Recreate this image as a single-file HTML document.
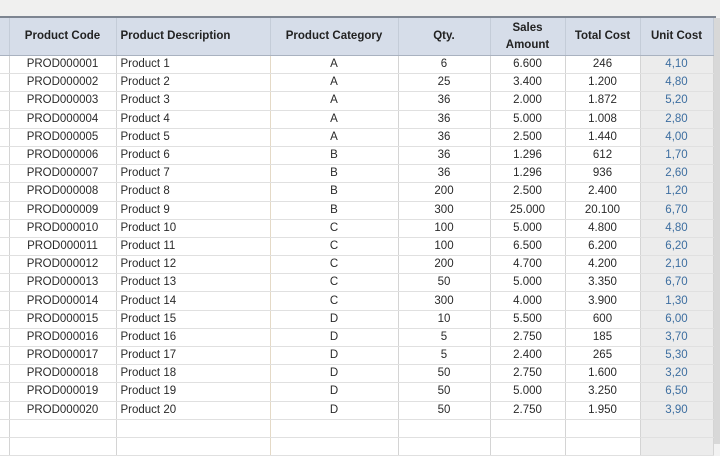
<!DOCTYPE html>
<html><head><style>
body{margin:0;width:720px;height:444px;overflow:hidden;background:#f2f2f2;font-family:"Liberation Sans",Arial,sans-serif;}
.top{position:absolute;left:0;top:0;width:720px;height:17px;background:#f0f0ef;}
.hl{position:absolute;left:0;top:16px;width:716px;height:2px;background:#7d8591;}
table{position:absolute;left:0;top:18px;border-collapse:collapse;table-layout:fixed;width:713px;background:#fff;}
tr.r{height:18.2px;}
td,th{font-size:11.5px;color:#2a2a2a;padding:0;line-height:15px;border-right:1px solid #d4d4d4;border-bottom:1px solid #e0e0e0;white-space:nowrap;overflow:hidden;}
th{background:#d6dde9;height:37px;font-weight:bold;font-size:11.5px;color:#222;line-height:17px;border-bottom:1px solid #a9b2c0;border-right:1px solid #c4ccd8;}
td{text-align:center;}
td.l{text-align:left;padding-left:4px;border-right:1px solid #e4d9c6;}
td.u{background:#ececec;color:#3d6ea0;}
.rg{position:absolute;left:713px;top:18px;width:7px;height:426px;background:#d8d8d8;}
</style></head><body>
<div class="top"></div><div class="hl"></div>
<div class="rg"></div>
<table>
<colgroup><col style="width:9px"><col style="width:107px"><col style="width:154px"><col style="width:128px"><col style="width:92px"><col style="width:75px"><col style="width:75px"><col style="width:73px"></colgroup>
<tr><th></th><th>Product Code</th><th style="text-align:left;padding-left:4px">Product Description</th><th>Product Category</th><th>Qty.</th><th>Sales<br>Amount</th><th>Total Cost</th><th>Unit Cost</th></tr>
<tr class="r"><td></td><td>PROD000001</td><td class="l">Product 1</td><td>A</td><td>6</td><td>6.600</td><td>246</td><td class="u">4,10</td></tr>
<tr class="r"><td></td><td>PROD000002</td><td class="l">Product 2</td><td>A</td><td>25</td><td>3.400</td><td>1.200</td><td class="u">4,80</td></tr>
<tr class="r"><td></td><td>PROD000003</td><td class="l">Product 3</td><td>A</td><td>36</td><td>2.000</td><td>1.872</td><td class="u">5,20</td></tr>
<tr class="r"><td></td><td>PROD000004</td><td class="l">Product 4</td><td>A</td><td>36</td><td>5.000</td><td>1.008</td><td class="u">2,80</td></tr>
<tr class="r"><td></td><td>PROD000005</td><td class="l">Product 5</td><td>A</td><td>36</td><td>2.500</td><td>1.440</td><td class="u">4,00</td></tr>
<tr class="r"><td></td><td>PROD000006</td><td class="l">Product 6</td><td>B</td><td>36</td><td>1.296</td><td>612</td><td class="u">1,70</td></tr>
<tr class="r"><td></td><td>PROD000007</td><td class="l">Product 7</td><td>B</td><td>36</td><td>1.296</td><td>936</td><td class="u">2,60</td></tr>
<tr class="r"><td></td><td>PROD000008</td><td class="l">Product 8</td><td>B</td><td>200</td><td>2.500</td><td>2.400</td><td class="u">1,20</td></tr>
<tr class="r"><td></td><td>PROD000009</td><td class="l">Product 9</td><td>B</td><td>300</td><td>25.000</td><td>20.100</td><td class="u">6,70</td></tr>
<tr class="r"><td></td><td>PROD000010</td><td class="l">Product 10</td><td>C</td><td>100</td><td>5.000</td><td>4.800</td><td class="u">4,80</td></tr>
<tr class="r"><td></td><td>PROD000011</td><td class="l">Product 11</td><td>C</td><td>100</td><td>6.500</td><td>6.200</td><td class="u">6,20</td></tr>
<tr class="r"><td></td><td>PROD000012</td><td class="l">Product 12</td><td>C</td><td>200</td><td>4.700</td><td>4.200</td><td class="u">2,10</td></tr>
<tr class="r"><td></td><td>PROD000013</td><td class="l">Product 13</td><td>C</td><td>50</td><td>5.000</td><td>3.350</td><td class="u">6,70</td></tr>
<tr class="r"><td></td><td>PROD000014</td><td class="l">Product 14</td><td>C</td><td>300</td><td>4.000</td><td>3.900</td><td class="u">1,30</td></tr>
<tr class="r"><td></td><td>PROD000015</td><td class="l">Product 15</td><td>D</td><td>10</td><td>5.500</td><td>600</td><td class="u">6,00</td></tr>
<tr class="r"><td></td><td>PROD000016</td><td class="l">Product 16</td><td>D</td><td>5</td><td>2.750</td><td>185</td><td class="u">3,70</td></tr>
<tr class="r"><td></td><td>PROD000017</td><td class="l">Product 17</td><td>D</td><td>5</td><td>2.400</td><td>265</td><td class="u">5,30</td></tr>
<tr class="r"><td></td><td>PROD000018</td><td class="l">Product 18</td><td>D</td><td>50</td><td>2.750</td><td>1.600</td><td class="u">3,20</td></tr>
<tr class="r"><td></td><td>PROD000019</td><td class="l">Product 19</td><td>D</td><td>50</td><td>5.000</td><td>3.250</td><td class="u">6,50</td></tr>
<tr class="r"><td></td><td>PROD000020</td><td class="l">Product 20</td><td>D</td><td>50</td><td>2.750</td><td>1.950</td><td class="u">3,90</td></tr>
<tr class="r"><td></td><td></td><td class="l"></td><td></td><td></td><td></td><td></td><td class="u"></td></tr>
<tr class="r"><td></td><td></td><td class="l"></td><td></td><td></td><td></td><td></td><td class="u"></td></tr>
</table>
</body></html>
